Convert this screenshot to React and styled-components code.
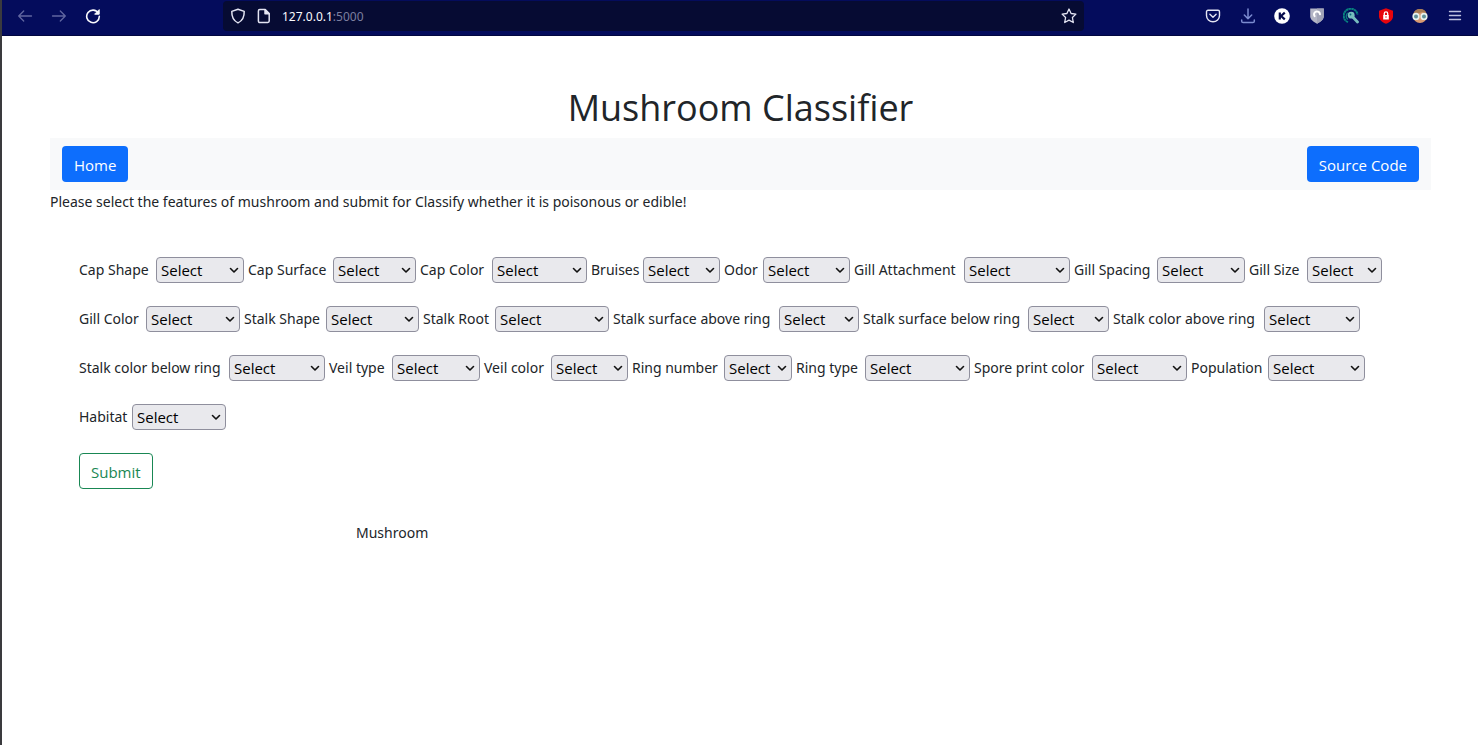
import React from 'react';
import styled, { createGlobalStyle } from 'styled-components';

const GlobalStyle = createGlobalStyle`
  * { box-sizing: border-box; }
  body {
    margin: 0;
    background: #fff;
    color: #212529;
    font: 14px/24px "Noto Sans", "Open Sans", sans-serif;
  }
`;

const Window = styled.div`
  min-height: 100vh;
  border-left: 2px solid #3a3a3e;
`;

const Toolbar = styled.header`
  display: flex;
  align-items: center;
  height: 36px;
  padding: 0 15px 3px;
  background: #040c5c;
  border-bottom: 1px solid #02073f;
`;

const IconButton = styled.button`
  display: flex;
  align-items: center;
  justify-content: center;
  width: 16px;
  height: 16px;
  padding: 0;
  border: 0;
  background: none;
  color: ${(p) => p.$color || '#e4e5f3'};
`;

const History = styled.div`
  display: flex;
  gap: 18px;
  width: 206px;
`;

const AddressBar = styled.div`
  display: flex;
  align-items: center;
  flex: 0 1 861px;
  height: 30px;
  padding: 0 7px;
  gap: 10px;
  border-radius: 4px;
  background: #060b33;
`;

const Url = styled.div`
  flex: 1;
  padding-top: 2px;
  color: #7c7f9f;
  font-size: 12px;
  line-height: 20px;
`;

const Host = styled.span`
  color: #fbfbfe;
`;

const Extensions = styled.div`
  display: flex;
  justify-content: space-between;
  width: 258px;
  margin-left: auto;
`;

const Page = styled.main`
  padding: 48px 47px 0 48px;
`;

const Title = styled.h1`
  margin: 0 0 6px;
  font-family: "Open Sans", sans-serif;
  font-size: 36px;
  line-height: 48px;
  font-weight: 400;
  text-align: center;
`;

const Navbar = styled.nav`
  display: flex;
  align-items: center;
  justify-content: space-between;
  height: 52px;
  padding: 0 12px;
  background: #f8f9fa;
`;

const NavLink = styled.a`
  padding: 7px 12px 5px;
  border-radius: 4px;
  background: #0d6efd;
  color: #fff;
  font-family: "Open Sans", sans-serif;
  font-size: 15px;
  text-decoration: none;
`;

const Intro = styled.p`
  margin: 0;
`;

const Form = styled.form`
  display: flex;
  flex-direction: column;
  align-items: flex-start;
  gap: 23px;
  padding: 43px 29px 0;
`;

const Row = styled.div`
  display: flex;
  flex-wrap: wrap;
  gap: 4px;
`;

const Field = styled.label`
  display: flex;
  align-items: center;
  justify-content: space-between;
  width: ${(p) => p.$width}px;
  height: 26px;
  white-space: nowrap;
`;

const SelectBox = styled.span`
  position: relative;
  display: flex;

  svg {
    position: absolute;
    right: 5px;
    top: 8px;
    pointer-events: none;
  }
`;

const Select = styled.select`
  appearance: none;
  width: ${(p) => p.$width}px;
  height: 26px;
  padding: 0 4px;
  border: 1px solid #8f8f9d;
  border-radius: 4px;
  background: #e9e9ed;
  color: #000;
  font-family: "Open Sans", sans-serif;
  font-size: 15px;
`;

const Submit = styled.button`
  height: 36px;
  padding: 1px 11px 0;
  border: 1px solid #198754;
  border-radius: 4px;
  background: #fff;
  color: #198754;
  font-family: "Open Sans", sans-serif;
  font-size: 15px;
`;

const Result = styled.p`
  margin: 32px 0 0 306px;
`;

// [label, width of the whole field, width of its drop-down]
const ROWS = [
  [
    ['Cap Shape', 165, 88],
    ['Cap Surface', 168, 83],
    ['Cap Color', 167, 95],
    ['Bruises', 129, 77],
    ['Odor', 126, 87],
    ['Gill Attachment', 216, 106],
    ['Gill Spacing', 171, 88],
    ['Gill Size', 133, 75],
  ],
  [
    ['Gill Color', 161, 94],
    ['Stalk Shape', 175, 93],
    ['Stalk Root', 186, 114],
    ['Stalk surface above ring', 246, 80],
    ['Stalk surface below ring', 246, 81],
    ['Stalk color above ring', 247, 96],
  ],
  [
    ['Stalk color below ring', 246, 96],
    ['Veil type', 151, 88],
    ['Veil color', 144, 77],
    ['Ring number', 160, 68],
    ['Ring type', 174, 105],
    ['Spore print color', 213, 95],
    ['Population', 174, 97],
  ],
  [['Habitat', 147, 94]],
];

const Icon = ({ children, width = 1.3 }) => (
  <svg width="16" height="16" viewBox="0 0 16 16" fill="none" stroke="currentColor"
    strokeWidth={width} strokeLinecap="round" strokeLinejoin="round" aria-hidden="true">
    {children}
  </svg>
);

const Feature = ({ label, width, selectWidth }) => (
  <Field $width={width}>
    {label}
    <SelectBox>
      <Select $width={selectWidth}>
        <option>Select</option>
      </Select>
      <svg width="10" height="10" viewBox="0 0 10 10" fill="none" stroke="#111" strokeWidth="1.6" strokeLinecap="round" strokeLinejoin="round" aria-hidden="true">
        <path d="M1.5 3.5 5 7l3.5-3.5" />
      </svg>
    </SelectBox>
  </Field>
);

export default function App() {
  return (
    <>
      <GlobalStyle />
      <Window>
        <Toolbar>
          <History>
            <IconButton aria-label="Back" $color="#6066a0">
              <Icon><path d="M14.5 8H1.7M6.7 3 1.7 8l5 5" /></Icon>
            </IconButton>
            <IconButton aria-label="Forward" $color="#6066a0">
              <Icon><path d="M1.5 8h12.8M9.3 3l5 5-5 5" /></Icon>
            </IconButton>
            <IconButton aria-label="Reload" $color="#fbfbfe">
              <Icon width={1.6}>
                <path d="M13.3 5A6.3 6.3 0 1 0 14.3 8.4" />
                <path d="M14.2 2v4.2H10z" fill="currentColor" strokeWidth="1" />
              </Icon>
            </IconButton>
          </History>
          <AddressBar>
            <IconButton aria-label="Tracking protection">
              <Icon width={1.5}><path d="M8 1.2 14.2 3.4C14.4 8.6 12.5 12.8 8 14.9 3.5 12.8 1.6 8.6 1.8 3.4z" /></Icon>
            </IconButton>
            <IconButton aria-label="Site information">
              <Icon width={1.5}>
                <path d="M3.8 1.5h5.4l4 4v7.6c0 .8-.6 1.4-1.4 1.4h-8c-.8 0-1.4-.6-1.4-1.4V2.9c0-.8.6-1.4 1.4-1.4z" />
                <path d="M9 1.7v4h4z" fill="currentColor" />
              </Icon>
            </IconButton>
            <Url><Host>127.0.0.1</Host>:5000</Url>
            <IconButton aria-label="Bookmark">
              <Icon><path d="m8 1 2.1 4.5 4.8.6-3.5 3.4.9 5L8 12.1l-4.3 2.4.9-5L1.1 6.1l4.8-.6z" /></Icon>
            </IconButton>
          </AddressBar>
          <Extensions>
            <IconButton aria-label="Pocket">
              <Icon width={1.4}>
                <path d="M3 2.3h10a1.5 1.5 0 0 1 1.5 1.5v3.7a6.5 6.2 0 0 1-13 0V3.8A1.5 1.5 0 0 1 3 2.3z" />
                <path d="m4.9 6.3 3.1 3 3.1-3" />
              </Icon>
            </IconButton>
            <IconButton aria-label="Downloads" $color="#7b8bd0">
              <Icon width={1.5}><path d="M8 1v9.7M4.3 7 8 10.7 11.7 7M1.7 12v1.2c0 .8.6 1.4 1.4 1.4h9.8c.8 0 1.4-.6 1.4-1.4V12" /></Icon>
            </IconButton>
            <IconButton aria-label="Keyboard extension">
              <Icon>
                <circle cx="8" cy="8" r="7.8" fill="#fff" stroke="none" />
                <path d="M5.8 4.4v7.2M10.8 4.6 7 8l3.8 3.4" stroke="#05094a" strokeWidth="2.2" strokeLinecap="butt" />
              </Icon>
            </IconButton>
            <IconButton aria-label="Privacy shield">
              <Icon>
                <path d="M1.2.4h13.6v7.9c0 3.3-3.400 5.800-6.800 7.500-3.400-1.700-6.800-4.200-6.800-7.500z" fill="#b3b5c5" stroke="none" />
                <path d="M8 15.8c3.4-1.700 6.800-4.200 6.800-7.500V.4H8z" fill="#a1a4b7" stroke="none" />
                <path d="M5.600 8.200A3 3 0 1 1 11 6.200" stroke="#fff" strokeWidth="2" />
              </Icon>
            </IconButton>
            <IconButton aria-label="Key search">
              <Icon>
                <path d="M5 14.200A7 7 0 1 1 14.600 6.500" stroke="#08817f" strokeWidth="2" strokeDasharray="2.500 .3" strokeLinecap="butt" />
                <path d="M4.400 11A4.600 4.600 0 0 1 4.300 5.300" stroke="#08817f" />
                <circle cx="8.200" cy="7.200" r="3.400" fill="#77bdbd" stroke="none" />
                <path d="m9.800 9 4.700 5" stroke="#77bdbd" strokeWidth="2.800" />
                <circle cx="7.500" cy="6.500" r=".9" fill="#08667a" stroke="none" />
              </Icon>
            </IconButton>
            <IconButton aria-label="Secure lock">
              <Icon>
                <path d="M8 .3 15 2.700v5.500c0 3.500-3.100 6-7 7.600C4.100 14.200 1 11.700 1 8.200V2.700z" fill="#e8050c" stroke="none" />
                <path d="M5.200 7h5.600v4.500H5.200z" fill="#fff" stroke="none" />
                <path d="M6.300 7V5.600a1.700 1.700 0 0 1 3.400 0V7" stroke="#fff" />
                <circle cx="8" cy="9" r=".7" fill="#e8050c" stroke="none" />
              </Icon>
            </IconButton>
            <IconButton aria-label="Profile">
              <Icon>
                <circle cx="8" cy="8" r="7" fill="#d99b72" stroke="none" />
                <path d="M1.500 7C1.500 3 4.500 1 8 1s6.500 2 6.500 6L10.500 4z" fill="#a77c55" stroke="none" />
                <circle cx="4" cy="8.400" r="2.800" fill="#5f9198" stroke="#e8f1ee" strokeWidth="1.600" />
                <circle cx="12" cy="8.400" r="2.800" fill="#5f9198" stroke="#e8f1ee" strokeWidth="1.600" />
              </Icon>
            </IconButton>
            <IconButton aria-label="Menu" $color="#bfc2df">
              <Icon width={1.4}><path d="M2.500 3.500h11M2.500 7.500h11M2.500 11.500h11" /></Icon>
            </IconButton>
          </Extensions>
        </Toolbar>
        <Page>
          <Title>Mushroom Classifier</Title>
          <Navbar>
            <NavLink href="#home">Home</NavLink>
            <NavLink href="#source">Source Code</NavLink>
          </Navbar>
          <Intro>Please select the features of mushroom and submit for Classify whether it is poisonous or edible!</Intro>
          <Form onSubmit={(e) => e.preventDefault()}>
            {ROWS.map((row) => (
              <Row key={row[0][0]}>
                {row.map(([label, width, selectWidth]) => (
                  <Feature key={label} label={label} width={width} selectWidth={selectWidth} />
                ))}
              </Row>
            ))}
            <Submit type="submit">Submit</Submit>
          </Form>
          <Result>Mushroom</Result>
        </Page>
      </Window>
    </>
  );
}
